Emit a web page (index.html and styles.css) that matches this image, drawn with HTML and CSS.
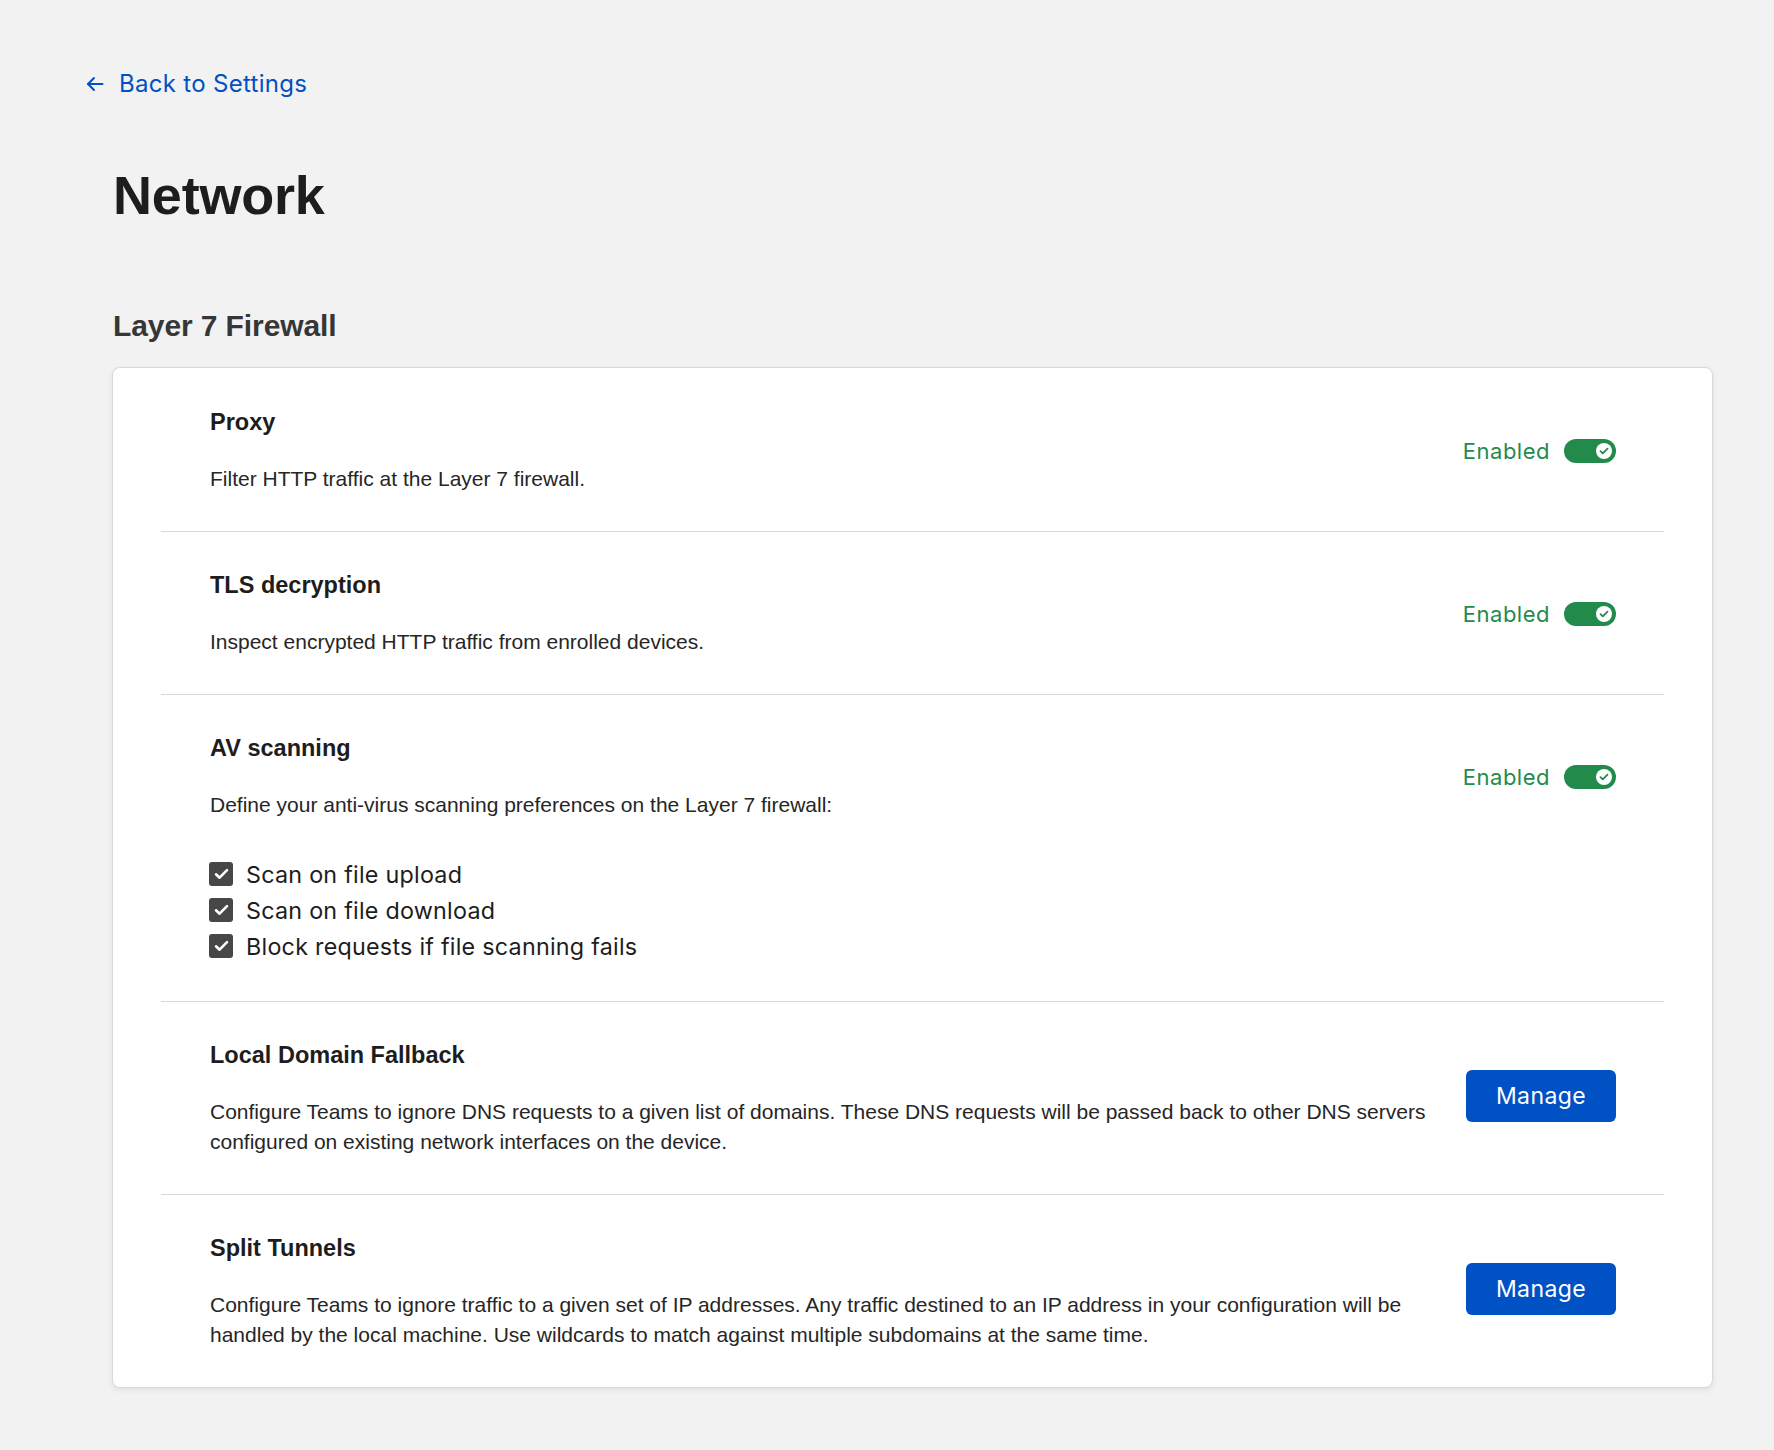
FILE: index.html
```html
<!DOCTYPE html>
<html lang="en">
<head>
<meta charset="utf-8">
<title>Network</title>
<link rel="stylesheet" href="styles.css">
</head>
<body>
<div class="page">
  <a class="back-link" href="#">
    <svg class="back-arrow" width="18" height="16" viewBox="0 0 18 16" fill="none" stroke="currentColor" stroke-width="2" stroke-linecap="round" stroke-linejoin="round"><path d="M16.5 8H2"/><path d="M8 2L2 8l6 6"/></svg>
    <span>Back to Settings</span>
  </a>

  <main class="content">
    <h1 class="page-title">Network</h1>
    <h2 class="section-title">Layer 7 Firewall</h2>

    <section class="card">
      <div class="row">
        <div class="row-head">
          <div class="row-text">
            <h3 class="row-title">Proxy</h3>
            <p class="row-desc">Filter HTTP traffic at the Layer 7 firewall.</p>
          </div>
          <div class="control">
            <span class="status">Enabled</span>
            <span class="toggle"><span class="knob"><svg width="10" height="8" viewBox="0 0 10 8" fill="none" stroke="#228b4b" stroke-width="1.8" stroke-linecap="round" stroke-linejoin="round"><path d="M1.5 4.2l2.3 2.2L8.5 1.6"/></svg></span></span>
          </div>
        </div>
      </div>

      <div class="row">
        <div class="row-head">
          <div class="row-text">
            <h3 class="row-title">TLS decryption</h3>
            <p class="row-desc">Inspect encrypted HTTP traffic from enrolled devices.</p>
          </div>
          <div class="control">
            <span class="status">Enabled</span>
            <span class="toggle"><span class="knob"><svg width="10" height="8" viewBox="0 0 10 8" fill="none" stroke="#228b4b" stroke-width="1.8" stroke-linecap="round" stroke-linejoin="round"><path d="M1.5 4.2l2.3 2.2L8.5 1.6"/></svg></span></span>
          </div>
        </div>
      </div>

      <div class="row">
        <div class="row-head">
          <div class="row-text">
            <h3 class="row-title">AV scanning</h3>
            <p class="row-desc">Define your anti-virus scanning preferences on the Layer 7 firewall:</p>
          </div>
          <div class="control">
            <span class="status">Enabled</span>
            <span class="toggle"><span class="knob"><svg width="10" height="8" viewBox="0 0 10 8" fill="none" stroke="#228b4b" stroke-width="1.8" stroke-linecap="round" stroke-linejoin="round"><path d="M1.5 4.2l2.3 2.2L8.5 1.6"/></svg></span></span>
          </div>
        </div>
        <ul class="checks">
          <li class="check-item"><span class="checkbox"><svg width="15" height="12" viewBox="0 0 15 12" fill="none" stroke="#fff" stroke-width="2.6" stroke-linecap="round" stroke-linejoin="round"><path d="M2 6.3l3.6 3.4L13 2.2"/></svg></span><span>Scan on file upload</span></li>
          <li class="check-item"><span class="checkbox"><svg width="15" height="12" viewBox="0 0 15 12" fill="none" stroke="#fff" stroke-width="2.6" stroke-linecap="round" stroke-linejoin="round"><path d="M2 6.3l3.6 3.4L13 2.2"/></svg></span><span>Scan on file download</span></li>
          <li class="check-item"><span class="checkbox"><svg width="15" height="12" viewBox="0 0 15 12" fill="none" stroke="#fff" stroke-width="2.6" stroke-linecap="round" stroke-linejoin="round"><path d="M2 6.3l3.6 3.4L13 2.2"/></svg></span><span>Block requests if file scanning fails</span></li>
        </ul>
      </div>

      <div class="row">
        <div class="row-head">
          <div class="row-text">
            <h3 class="row-title">Local Domain Fallback</h3>
            <p class="row-desc">Configure Teams to ignore DNS requests to a given list of domains. These DNS requests will be passed back to other DNS servers configured on existing network interfaces on the device.</p>
          </div>
          <div class="control">
            <button class="btn" type="button">Manage</button>
          </div>
        </div>
      </div>

      <div class="row">
        <div class="row-head">
          <div class="row-text">
            <h3 class="row-title">Split Tunnels</h3>
            <p class="row-desc">Configure Teams to ignore traffic to a given set of IP addresses. Any traffic destined to an IP address in your configuration will be handled by the local machine. Use wildcards to match against multiple subdomains at the same time.</p>
          </div>
          <div class="control">
            <button class="btn" type="button">Manage</button>
          </div>
        </div>
      </div>
    </section>
  </main>
</div>
</body>
</html>
```

FILE: styles.css
```css
* {
  box-sizing: border-box;
}

html, body {
  margin: 0;
  padding: 0;
  background: #f2f2f2;
}

body {
  font-family: "Liberation Sans", Arial, Helvetica, sans-serif;
  color: #1d1d1d;
  min-height: 1450px;
}

.page {
  padding: 69px 61px 62px 86px;
}

.back-link {
  display: inline-flex;
  align-items: center;
  gap: 15px;
  color: #0051c3;
  text-decoration: none;
  font-family: Inter, "Noto Sans", sans-serif;
  font-size: 24px;
  line-height: 30px;
  letter-spacing: 0.3px;
}

.back-arrow {
  display: block;
  margin-top: -1px;
}

.content {
  padding-left: 26px;
}

.page-title {
  margin: 66px 0 0 1px;
  font-size: 54px;
  line-height: 60px;
  font-weight: 700;
  color: #1d1d1d;
  letter-spacing: -0.2px;
}

.section-title {
  margin: 83px 0 0 1px;
  font-size: 30px;
  line-height: 36px;
  font-weight: 700;
  color: #363636;
  letter-spacing: -0.1px;
}

.card {
  margin-top: 23px;
  background: #fff;
  border: 1px solid #d9d9d9;
  border-radius: 8px;
  box-shadow: 0 2px 6px rgba(0, 0, 0, 0.08);
  padding: 0 48px;
}

.row {
  padding: 39px 48px 37px;
}

.row:first-child {
  padding-top: 40px;
}

.row + .row {
  border-top: 1px solid #d9d9d9;
}

.row-head {
  display: flex;
  align-items: center;
  gap: 32px;
}

.row-text {
  flex: 1;
  min-width: 0;
}

.row-title {
  margin: 0 0 0 1px;
  font-size: 23.5px;
  line-height: 28px;
  font-weight: 700;
  color: #1d1d1d;
}

.row-desc {
  margin: 28px 0 0 1px;
  font-size: 21px;
  line-height: 30px;
  color: #262626;
}

.control {
  display: flex;
  align-items: center;
  gap: 14px;
  flex-shrink: 0;
}

.status {
  font-family: Inter, "Noto Sans", sans-serif;
  font-size: 22px;
  line-height: 28px;
  letter-spacing: 0.5px;
  color: #238b4c;
}

.toggle {
  display: flex;
  align-items: center;
  justify-content: flex-end;
  width: 52px;
  height: 24px;
  padding: 0 4px;
  border-radius: 12px;
  background: #228b4b;
}

.knob {
  display: flex;
  align-items: center;
  justify-content: center;
  width: 16px;
  height: 16px;
  border-radius: 50%;
  background: #fff;
}

.knob svg {
  display: block;
}

.checks {
  list-style: none;
  margin: 36px 0 0;
  padding: 0;
}

.check-item {
  display: flex;
  align-items: center;
  gap: 13px;
  height: 36px;
  font-family: Inter, "Noto Sans", sans-serif;
  font-size: 23.3px;
  color: #1d1d1d;
  letter-spacing: 0.25px;
}

.checkbox {
  display: flex;
  align-items: center;
  justify-content: center;
  width: 24px;
  height: 24px;
  border-radius: 3px;
  background: #474747;
}

.checkbox svg {
  display: block;
}

.btn {
  width: 150px;
  height: 52px;
  margin-bottom: 6px;
  border: 0;
  border-radius: 6px;
  background: #0051c3;
  color: #fff;
  font-family: Inter, "Noto Sans", sans-serif;
  font-size: 23px;
  letter-spacing: 0.4px;
  cursor: pointer;
}
```
